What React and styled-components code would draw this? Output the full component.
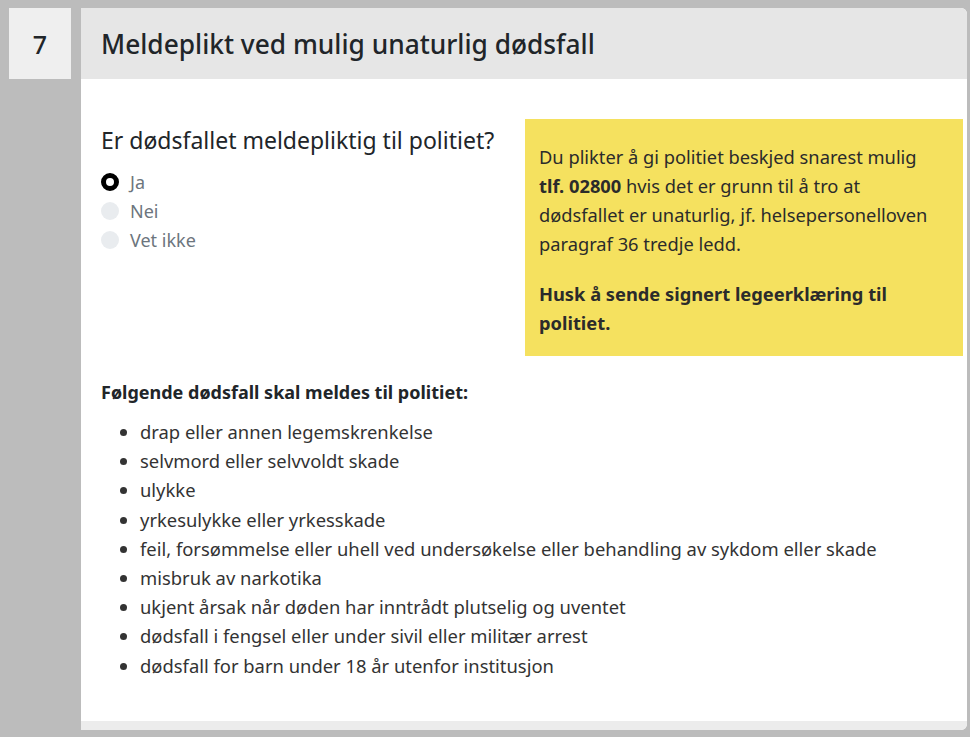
import styled, { createGlobalStyle } from "styled-components";

const GlobalStyle = createGlobalStyle`
  body {
    margin: 0;
    background: #bcbcbc;
    font-family: "Noto Sans", "Open Sans", sans-serif;
    color: #212529;
  }
`;

const options = [
  { label: "Ja", checked: true },
  { label: "Nei" },
  { label: "Vet ikke" },
];

const items = [
  "drap eller annen legemskrenkelse",
  "selvmord eller selvvoldt skade",
  "ulykke",
  "yrkesulykke eller yrkesskade",
  "feil, forsømmelse eller uhell ved undersøkelse eller behandling av sykdom eller skade",
  "misbruk av narkotika",
  "ukjent årsak når døden har inntrådt plutselig og uventet",
  "dødsfall i fengsel eller under sivil eller militær arrest",
  "dødsfall for barn under 18 år utenfor institusjon",
];

export default function App() {
  return (
    <Page>
      <GlobalStyle />
      <StepNumber>7</StepNumber>
      <Card>
        <Header>Meldeplikt ved mulig unaturlig dødsfall</Header>
        <Body>
          <TopRow>
            <Question>
              <QuestionTitle>Er dødsfallet meldepliktig til politiet?</QuestionTitle>
              {options.map((o) => (
                <Option key={o.label}>
                  <Radio checked={o.checked} />
                  {o.label}
                </Option>
              ))}
            </Question>
            <Notice>
              <p>
                Du plikter å gi politiet beskjed snarest mulig <b>tlf. 02800</b> hvis det er
                grunn til å tro at dødsfallet er unaturlig, jf. helsepersonelloven paragraf 36
                tredje ledd.
              </p>
              <p>
                <b>Husk å sende signert legeerklæring til politiet.</b>
              </p>
            </Notice>
          </TopRow>
          <ListTitle>Følgende dødsfall skal meldes til politiet:</ListTitle>
          <List>
            {items.map((t) => (
              <li key={t}>{t}</li>
            ))}
          </List>
        </Body>
        <Footer />
      </Card>
    </Page>
  );
}

const Page = styled.div`
  display: flex;
  gap: 10px;
  padding: 8px 3px 7px 9px;
  height: 737px;
  box-sizing: border-box;
`;

const StepNumber = styled.div`
  width: 62px;
  height: 71px;
  flex-shrink: 0;
  background: #efefef;
  display: flex;
  align-items: center;
  justify-content: center;
  font-size: 25px;
  font-weight: 500;
  color: #212529;
`;

const Card = styled.div`
  flex: 1;
  background: #fff;
  border-radius: 0 6px 6px 0;
  overflow: hidden;
  display: flex;
  flex-direction: column;
`;

const Header = styled.div`
  height: 71px;
  flex-shrink: 0;
  background: #e6e6e6;
  display: flex;
  align-items: center;
  padding-left: 20px;
  font-size: 26.3px;
  font-weight: 500;
`;

const Body = styled.div`
  flex: 1;
  padding: 40px 4px 0 20px;
`;

const TopRow = styled.div`
  display: flex;
  justify-content: space-between;
  align-items: flex-start;
`;

const Question = styled.div`
  padding-top: 5px;
`;

const QuestionTitle = styled.div`
  font-size: 23px;
  line-height: 32px;
  margin-bottom: 11px;
`;

const Option = styled.label`
  display: flex;
  align-items: center;
  gap: 11px;
  height: 29px;
  font-size: 18px;
  color: #6c757d;
`;

const Radio = styled.span`
  width: 18px;
  height: 18px;
  border-radius: 50%;
  box-sizing: border-box;
  background: ${(p) => (p.checked ? "#fff" : "#e9ecef")};
  border: ${(p) => (p.checked ? "5px solid #000" : "none")};
`;

const Notice = styled.div`
  width: 438px;
  box-sizing: border-box;
  background: #f5e15f;
  padding: 23px 26px 19px 14px;
  font-size: 18.3px;
  line-height: 29px;
  color: #2b2b2b;
  p {
    margin: 0;
  }
  p + p {
    margin-top: 21px;
  }
`;

const ListTitle = styled.div`
  margin-top: 22px;
  font-size: 18px;
  font-weight: 700;
  line-height: 29px;
`;

const List = styled.ul`
  margin: 10px 0 0;
  padding-left: 39px;
  font-size: 18.4px;
  line-height: 29.2px;
  color: #333;
`;

const Footer = styled.div`
  height: 9px;
  background: #ececec;
`;
